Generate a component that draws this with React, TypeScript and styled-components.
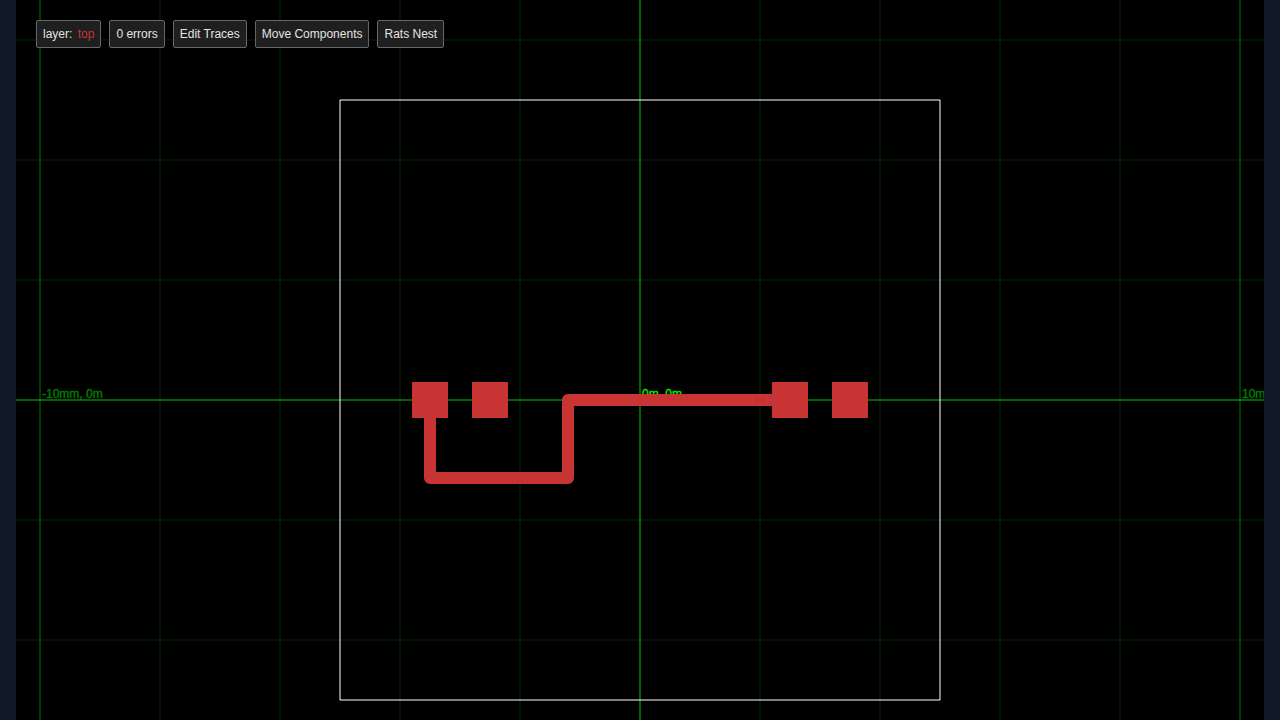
import React from "react";
import styled, { createGlobalStyle } from "styled-components";

const GlobalStyle = createGlobalStyle`
  body {
    margin: 0;
    background: #111827;
    font-family: "Liberation Sans", Arial, sans-serif;
  }
`;

const Page = styled.main`
  display: grid;
  height: 100vh;
  padding: 0 16px;
  overflow: hidden;
`;

const Viewer = styled.section`
  position: relative;
  min-width: 0;
  min-height: 0;
  overflow: hidden;
  background: #000;
`;

const Board = styled.svg`
  display: block;
  width: 100%;
  height: 100%;
`;

const Toolbar = styled.div`
  position: absolute;
  top: 20px;
  left: 20px;
  display: flex;
  gap: 8px;
`;

const ToolbarButton = styled.button`
  margin: 0;
  padding: 4px 6px;
  border: 1px solid #666;
  border-radius: 2px;
  background: #1f1f1f;
  color: #e4e4e4;
  font-family: inherit;
  font-size: 12px;
  line-height: 18px;
  white-space: nowrap;
  cursor: pointer;
`;

const LayerName = styled.span`
  margin-left: 2px;
  color: #c83434;
`;

const GridLine = styled.path<{ $alpha: number }>`
  stroke: rgb(0, 255, 0);
  stroke-opacity: ${(p) => p.$alpha};
  stroke-width: 2;
`;

const GridLabel = styled.text<{ $alpha: number }>`
  fill: rgb(0, 255, 0);
  stroke: rgb(0, 255, 0);
  stroke-opacity: 0.3;
  stroke-width: 1;
  opacity: ${(p) => p.$alpha};
  font-size: 12px;
`;

const OutlineEdge = styled.path`
  stroke: #fff;
  stroke-opacity: 0.5;
  stroke-width: 2;
`;

const Pad = styled.rect`
  fill: #c83434;
`;

const Trace = styled.path`
  fill: none;
  stroke: #c83434;
  stroke-width: 12;
  stroke-linecap: round;
  stroke-linejoin: round;
`;

// World units are millimetres; 60 px per mm with the origin at (624, 400).
const SCALE = 60;
const X0 = 624;
const Y0 = 400;
const px = (mm: number) => X0 + mm * SCALE;
const py = (mm: number) => Y0 - mm * SCALE;

const minorX = [-10, -8, -6, -4, -2, 0, 2, 4, 6, 8, 10];
const minorY = [-4, -2, 0, 2, 4, 6];
const pads = [-3.5, -2.5, 2.5, 3.5];
const edges: [number, number, number, number][] = [
  [-5, 5, 5, 5],
  [5, 5, 5, -5],
  [5, -5, -5, -5],
  [-5, -5, -5, 5],
];
const route: [number, number][] = [
  [-3.5, 0],
  [-3.5, -1.3],
  [-1.2, -1.3],
  [-1.2, 0],
  [2.5, 0],
];

export default function App() {
  return (
    <>
      <GlobalStyle />
      <Page>
        <Viewer aria-label="PCB viewer">
          <Board viewBox="0 0 1248 720" preserveAspectRatio="xMidYMid slice" aria-label="Circuit board">
            {minorX.map((x) => (
              <GridLine key={`x${x}`} $alpha={0.08} d={`M${px(x)} 0V720`} />
            ))}
            {minorY.map((y) => (
              <GridLine key={`y${y}`} $alpha={0.08} d={`M0 ${py(y)}H1248`} />
            ))}
            <GridLine $alpha={0.17} d={`M${px(-10)} 0V720M${px(10)} 0V720`} />
            <GridLine $alpha={0.34} d={`M${px(0)} 0V720`} />
            <GridLine $alpha={0.34} d={`M0 ${py(0)}H1248`} />
            <GridLabel $alpha={0.5} x={px(-10) + 2} y={Y0 - 2}>-10mm, 0m</GridLabel>
            <GridLabel $alpha={1} x={px(0) + 2} y={Y0 - 2}>0m, 0m</GridLabel>
            <GridLabel $alpha={0.5} x={px(10) + 2} y={Y0 - 2}>10mm, 0m</GridLabel>
            {edges.map(([x1, y1, x2, y2]) => (
              <OutlineEdge key={`${x1},${y1}`} d={`M${px(x1)} ${py(y1)}L${px(x2)} ${py(y2)}`} />
            ))}
            {pads.map((x) => (
              <Pad key={x} x={px(x) - 18} y={Y0 - 18} width={36} height={36} />
            ))}
            <Trace d={`M${route.map(([x, y]) => `${px(x)} ${py(y)}`).join("L")}`} />
          </Board>
          <Toolbar>
            <ToolbarButton type="button">
              layer: <LayerName>top</LayerName>
            </ToolbarButton>
            <ToolbarButton type="button">0 errors</ToolbarButton>
            <ToolbarButton type="button">Edit Traces</ToolbarButton>
            <ToolbarButton type="button">Move Components</ToolbarButton>
            <ToolbarButton type="button">Rats Nest</ToolbarButton>
          </Toolbar>
        </Viewer>
      </Page>
    </>
  );
}
